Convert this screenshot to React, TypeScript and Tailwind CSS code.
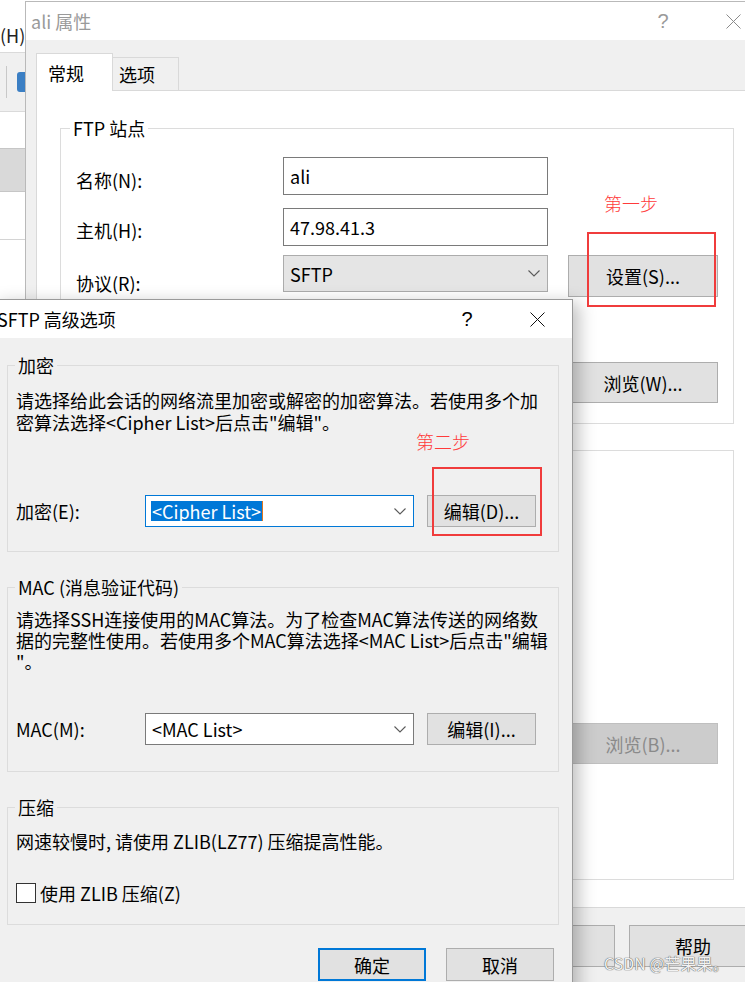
import type { ReactNode } from "react";

const FONT = "font-['Noto_Sans_CJK_SC',sans-serif]";

function Chevron() {
  return (
    <svg width="12" height="7" viewBox="0 0 12 7" className="ml-auto shrink-0">
      <path d="M0.5 0.5 L6 6 L11.5 0.5" fill="none" stroke="#5a5a5a" strokeWidth="1.1" />
    </svg>
  );
}

function CloseGlyph({ color }: { color: string }) {
  return (
    <svg width="15" height="15" viewBox="0 0 15 15">
      <path d="M0.5 0.5 L14.5 14.5 M14.5 0.5 L0.5 14.5" stroke={color} strokeWidth="1" fill="none" />
    </svg>
  );
}

function Btn({ children, className = "" }: { children?: ReactNode; className?: string }) {
  return (
    <div className={`flex items-center justify-center border border-[#adadad] bg-[#e1e1e1] ${className}`}>
      {children}
    </div>
  );
}

// fieldset + legend gives the classic group box; padding goes on the inner div
// so the legend keeps its own offset
function Group({
  legend,
  legendClass = "",
  className = "",
  bodyClass = "",
  children,
}: {
  legend?: string;
  legendClass?: string;
  className?: string;
  bodyClass?: string;
  children: ReactNode;
}) {
  return (
    <fieldset className={`border border-[#dcdcdc] ${className}`}>
      {legend ? <legend className={`px-[3px] leading-[24px] ${legendClass}`}>{legend}</legend> : null}
      <div className={bodyClass}>{children}</div>
    </fieldset>
  );
}

/* the app window peeking out on the far left */
function BackApp() {
  return (
    <div className="absolute left-0 top-0 flex w-[25px] flex-col bg-white">
      <div className="flex h-[52px] items-end pb-[5px] leading-[24px] text-[#222]">(H)</div>
      <div className="flex h-[60px] items-center border-y border-[#dadada] bg-[#f0f0f0] pl-[6px]">
        <div className="h-[32px] w-px bg-[#c8c8c8]" />
        <div className="ml-[10px] h-[20px] w-[8px] rounded-l-[3px] bg-[#3b7fc4]" />
      </div>
      <div className="h-[36px]" />
      <div className="h-[44px] border-y border-[#c6c6c6] bg-[#d9d9d9]" />
      <div className="h-[48px] border-b border-[#d4d4d4]" />
      <div className="h-[60px]" />
    </div>
  );
}

function PropsWindow() {
  return (
    <div className="absolute left-[25px] top-[1px] flex h-[1000px] w-[760px] flex-col border-l border-t border-[#b9b9b9] bg-[#f0f0f0]">
      <div className="flex h-[38px] shrink-0 items-center bg-white pl-[5px] pr-[17px] text-[#9a9a9a]">
        <span>ali 属性</span>
        <span className="ml-auto flex w-[70px] justify-center font-['Liberation_Sans',sans-serif] text-[20px]">?</span>
        <span className="flex w-[70px] justify-center">
          <CloseGlyph color="#8a8a8a" />
        </span>
      </div>

      <div className="flex h-[50px] shrink-0 items-end pl-[10px]">
        <div className="relative z-10 -mb-px flex h-[38px] w-[77px] items-center border border-b-0 border-[#d9d9d9] bg-white pl-[11px]">
          常规
        </div>
        <div className="flex h-[33px] w-[66px] items-center border border-b-0 border-l-0 border-[#d9d9d9] bg-[#f0f0f0] pl-[6px]">
          选项
        </div>
      </div>

      <div className="ml-[10px] mr-[10px] h-[818px] shrink-0 border border-[#d9d9d9] bg-white pl-[23px] pt-[25px]">
        <Group legend="FTP 站点" legendClass="ml-[9px]" className="h-[308px] w-[674px]" bodyClass="pl-[15px]">
          <div className="mt-[17px] flex h-[38px] items-start">
            <span className="w-[207px] pt-[11px]">名称(N):</span>
            <div className="flex h-[38px] w-[265px] items-center border border-[#7a7a7a] bg-white pl-[6px]">ali</div>
          </div>
          <div className="mt-[13px] flex h-[38px] items-start">
            <span className="w-[207px] pt-[10px]">主机(H):</span>
            <div className="flex h-[38px] w-[265px] items-center border border-[#7a7a7a] bg-white pl-[6px]">47.98.41.3</div>
          </div>
          <div className="mt-[9px] flex h-[42px] items-start">
            <span className="w-[207px] pt-[16px]">协议(R):</span>
            <div className="flex h-[37px] w-[265px] items-center border border-[#acacac] bg-[#e5e5e5] pl-[6px] pr-[7px]">
              SFTP
              <Chevron />
            </div>
            <Btn className="ml-[20px] h-[42px] w-[150px]">设置(S)...</Btn>
          </div>
          <div className="mt-[65px] flex h-[41px] items-start">
            <span className="w-[207px]" />
            <div className="h-[38px] w-[265px] border border-[#7a7a7a] bg-white" />
            <Btn className="ml-[20px] h-[41px] w-[150px]">浏览(W)...</Btn>
          </div>
        </Group>

        <Group className="mt-[26px] h-[430px] w-[674px]" bodyClass="pl-[15px]">
          <div className="mt-[272px] flex h-[41px] items-start">
            <span className="w-[207px]" />
            <div className="h-[38px] w-[265px] border border-[#cccccc] bg-[#f0f0f0]" />
            <div className="ml-[20px] flex h-[41px] w-[150px] items-center justify-center border border-[#bfbfbf] bg-[#cccccc] text-[#8a8a8a]">
              浏览(B)...
            </div>
          </div>
        </Group>
      </div>

      <div className="mt-[17px] flex justify-end gap-[14px] pr-[28px]">
        <Btn className="h-[42px] w-[128px]" />
        <Btn className="h-[42px] w-[128px]" />
        <Btn className="h-[42px] w-[128px]">帮助</Btn>
      </div>
    </div>
  );
}

function SftpDialog() {
  return (
    <div className="absolute left-[-7px] top-[299px] flex h-[700px] w-[580px] flex-col border border-[#9a9a9a] bg-[#f0f0f0] shadow-[6px_4px_16px_rgba(0,0,0,0.25)]">
      <div className="flex h-[38px] shrink-0 items-center bg-white pl-[3px]">
        <span>SFTP 高级选项</span>
        <span className="ml-auto flex w-[70px] justify-center font-['Liberation_Sans',sans-serif] text-[20px]">?</span>
        <span className="flex w-[70px] justify-center">
          <CloseGlyph color="#111" />
        </span>
      </div>

      <div className="flex flex-col px-[13px] pt-[15px]">
        <Group legend="加密" legendClass="ml-[7px]" className="h-[199px]" bodyClass="px-[8px]">
          <p className="mt-[12px] leading-[22px]">
            请选择给此会话的网络流里加密或解密的加密算法。若使用多个加
            <br />
            密算法选择{"<Cipher List>"}后点击{'"编辑"'}。
          </p>
          <div className="mt-[62px] flex h-[32px] items-center">
            <span className="w-[129px]">加密(E):</span>
            <div className="flex h-[32px] w-[269px] items-center border border-[#0078d7] bg-white pl-[5px] pr-[7px]">
              <span className="bg-[#0078d7] px-px leading-[20px] text-white">{"<Cipher List>"}</span>
              <span className="h-[20px] w-px bg-[#e0761e]" />
              <Chevron />
            </div>
            <Btn className="ml-[13px] h-[32px] w-[109px]">编辑(D)...</Btn>
          </div>
        </Group>

        <Group legend="MAC (消息验证代码)" legendClass="ml-[7px]" className="mt-[23px] h-[197px]" bodyClass="px-[8px]">
          <p className="mt-[10px] leading-[21px]">
            请选择SSH连接使用的MAC算法。为了检查MAC算法传送的网络数
            <br />
            据的完整性使用。若使用多个MAC算法选择{"<MAC List>"}后点击{'"编辑'}
            <br />
            {'"'}。
          </p>
          <div className="mt-[41px] flex h-[32px] items-center">
            <span className="w-[129px]">MAC(M):</span>
            <div className="flex h-[32px] w-[269px] items-center border border-[#7a7a7a] bg-white pl-[6px] pr-[7px]">
              {"<MAC List>"}
              <Chevron />
            </div>
            <Btn className="ml-[13px] h-[32px] w-[109px]">编辑(I)...</Btn>
          </div>
        </Group>

        <Group legend="压缩" legendClass="ml-[7px]" className="mt-[23px] h-[130px]" bodyClass="px-[8px]">
          <p className="mt-[11px] leading-[22px]">网速较慢时, 请使用 ZLIB(LZ77) 压缩提高性能。</p>
          <label className="mt-[30px] flex h-[22px] items-center gap-[4px]">
            <span className="h-[20px] w-[20px] border border-[#333333] bg-white" />
            使用 ZLIB 压缩(Z)
          </label>
        </Group>

        <div className="mt-[23px] flex justify-end gap-[20px] pr-[5px]">
          <div className="flex h-[33px] w-[108px] items-center justify-center border-2 border-[#0078d7] bg-[#e1e1e1]">
            确定
          </div>
          <Btn className="h-[33px] w-[108px]">取消</Btn>
        </div>
      </div>
    </div>
  );
}

export default function App() {
  return (
    <div className={`relative h-[982px] w-[745px] overflow-hidden bg-white text-[18px] leading-[24px] text-black ${FONT}`}>
      <BackApp />
      <PropsWindow />
      <SftpDialog />

      {/* red step annotations drawn over the screenshot */}
      <span className="absolute left-[604px] top-[191px] font-light text-[#ff3b3b]">第一步</span>
      <div className="absolute left-[587px] top-[232px] h-[75px] w-[129px] border-2 border-[#f03c3c]" />
      <span className="absolute left-[416px] top-[429px] font-light text-[#ff3b3b]">第二步</span>
      <div className="absolute left-[432px] top-[467px] h-[69px] w-[110px] border-2 border-[#f03c3c]" />

      <span className="absolute left-[604px] top-[952px] text-[16px] leading-[22px] text-[#f2f2f2] [text-shadow:0_0_1px_#555,0_0_1px_#555]">
        CSDN @芒果果。
      </span>
    </div>
  );
}
